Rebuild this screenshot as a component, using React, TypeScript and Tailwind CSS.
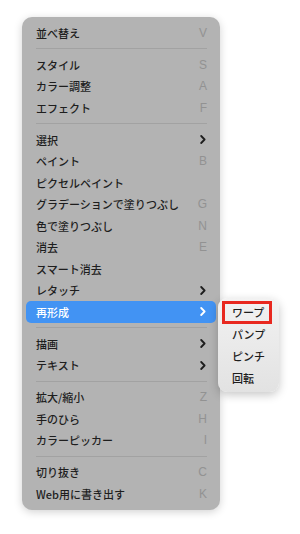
type Item = { label: string; key?: string; sub?: boolean; active?: boolean }

const groups: Item[][] = [
  [{ label: '並べ替え', key: 'V' }],
  [
    { label: 'スタイル', key: 'S' },
    { label: 'カラー調整', key: 'A' },
    { label: 'エフェクト', key: 'F' },
  ],
  [
    { label: '選択', sub: true },
    { label: 'ペイント', key: 'B' },
    { label: 'ピクセルペイント' },
    { label: 'グラデーションで塗りつぶし', key: 'G' },
    { label: '色で塗りつぶし', key: 'N' },
    { label: '消去', key: 'E' },
    { label: 'スマート消去' },
    { label: 'レタッチ', sub: true },
    { label: '再形成', sub: true, active: true },
  ],
  [
    { label: '描画', sub: true },
    { label: 'テキスト', sub: true },
  ],
  [
    { label: '拡大/縮小', key: 'Z' },
    { label: '手のひら', key: 'H' },
    { label: 'カラーピッカー', key: 'I' },
  ],
  [
    { label: '切り抜き', key: 'C' },
    { label: 'Web用に書き出す', key: 'K' },
  ],
]

const subItems = ['ワープ', 'パンプ', 'ピンチ', '回転']

function Chevron() {
  return (
    <svg width="6" height="9" viewBox="0 0 6 9" className="mr-[1px]">
      <path d="M1.2 1 L4.6 4.5 L1.2 8" fill="none" stroke="currentColor" strokeWidth="1.8" strokeLinecap="round" strokeLinejoin="round" />
    </svg>
  )
}

function Row({ item }: { item: Item }) {
  return (
    <div
      className={`mx-1 flex h-[21.5px] items-center justify-between rounded-[5px] pl-[10px] pr-[9px] ${
        item.active ? 'bg-[#4293f3] text-white' : 'text-[#1e1e1e]'
      }`}
    >
      <span>{item.label}</span>
      {item.sub ? (
        <Chevron />
      ) : (
        <span className="text-[12px] font-normal text-[#929292]" style={{ fontFamily: '"Liberation Sans", sans-serif' }}>
          {item.key}
        </span>
      )}
    </div>
  )
}

export default function App() {
  return (
    <div
      className="relative h-[534px] w-[300px] bg-white"
      style={{ fontFamily: '"Noto Sans CJK JP", "Liberation Sans", sans-serif' }}
    >
      <div className="pl-[22px] pt-[17px]">
        <div className="w-[198px] rounded-[10px] bg-[#b3b3b3] py-[5px] text-[11px] font-medium shadow-[0_2px_8px_rgba(0,0,0,0.18)]">
          {groups.map((g, i) => (
            <div key={i}>
              {i > 0 && <div className="ml-[14px] mr-[13px] my-[4.75px] h-px bg-[#a2a2a2]" />}
              {g.map((item) => (
                <Row key={item.label} item={item} />
              ))}
            </div>
          ))}
        </div>
      </div>

      <div className="absolute left-[218px] top-[298px] w-[61px] rounded-[9px] bg-gradient-to-b from-[#f2f2f2] to-[#e2e2e2] py-[3px] text-[11px] font-medium text-[#1e1e1e] shadow-[0_3px_10px_rgba(0,0,0,0.22)]">
        {subItems.map((s, i) => (
          <div key={s} className="flex h-[22px] items-center pl-[4px] pr-[7px]">
            <div
              className={`flex w-full items-center ${
                i === 0 ? 'h-[23px] border-[3px] border-[#e8281f] pl-[7px]' : 'h-full pl-[10px]'
              }`}
            >
              {s}
            </div>
          </div>
        ))}
      </div>
    </div>
  )
}
